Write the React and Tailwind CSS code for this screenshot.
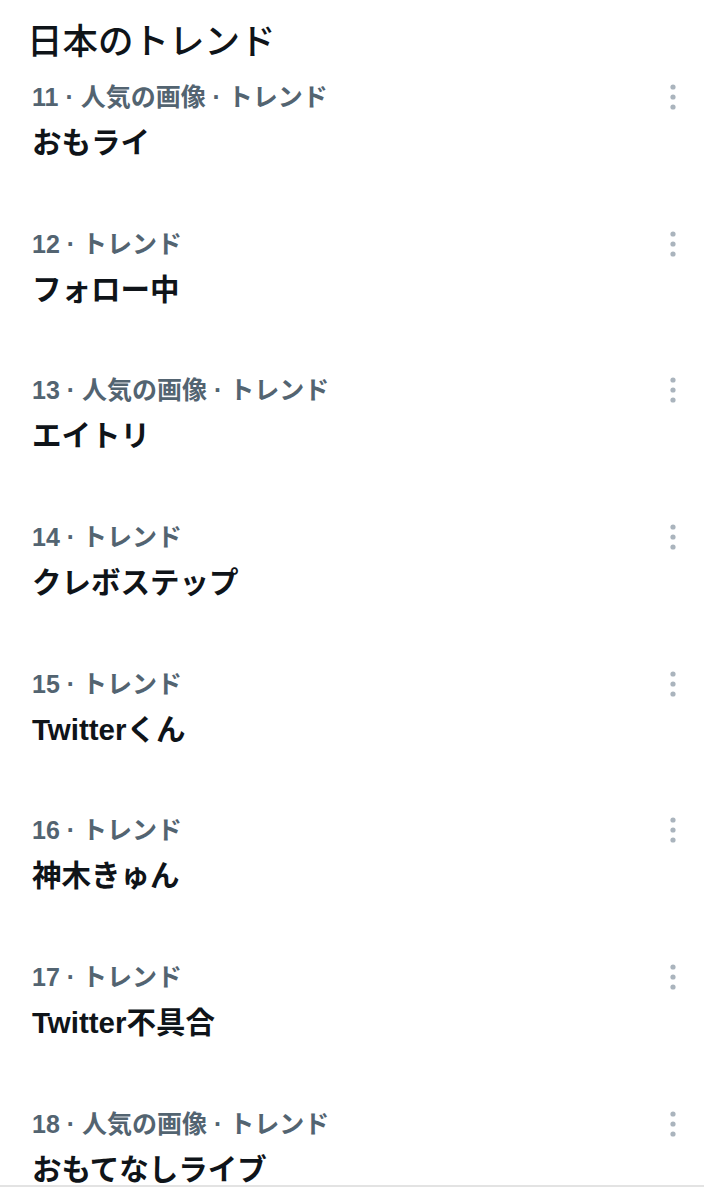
import React from "react";

const items = [
  { n: 11, cat: "人気の画像 · トレンド", name: "おもライ" },
  { n: 12, cat: "トレンド", name: "フォロー中" },
  { n: 13, cat: "人気の画像 · トレンド", name: "エイトリ" },
  { n: 14, cat: "トレンド", name: "クレボステップ" },
  { n: 15, cat: "トレンド", name: "Twitterくん" },
  { n: 16, cat: "トレンド", name: "神木きゅん" },
  { n: 17, cat: "トレンド", name: "Twitter不具合" },
  { n: 18, cat: "人気の画像 · トレンド", name: "おもてなしライブ" },
];

function Dots() {
  return (
    <svg width="8" height="28" viewBox="0 0 8 28" className="block">
      <circle cx="4" cy="4" r="2.6" fill="#aab4bd" />
      <circle cx="4" cy="14" r="2.6" fill="#aab4bd" />
      <circle cx="4" cy="24" r="2.6" fill="#aab4bd" />
    </svg>
  );
}

export default function App() {
  return (
    <div
      className="w-[704px] h-[1200px] bg-white overflow-hidden"
      style={{ fontFamily: '"Liberation Sans", "Noto Sans CJK JP", sans-serif' }}
    >
      <div className="pl-[27px] pt-[20px] h-[71px]">
        <div className="text-[35.5px] leading-[44px] font-medium text-[#0f1419]">
          日本のトレンド
        </div>
      </div>
      <div className="border-b-2 border-[#e3e3e3]">
        {items.map((it, i) => (
          <div
            key={it.n}
            className={
              (i === items.length - 1 ? "h-[87px]" : "h-[146.67px]") +
              " flex pl-[32px] pr-[27px] pt-[10px]"
            }
          >
            <div className="flex-1 flex flex-col">
              <div className="text-[25px] leading-[32px] font-bold text-[#536471] whitespace-nowrap">
                {it.n} · {it.cat}
              </div>
              <div className="mt-[12px] text-[29.5px] leading-[36px] font-bold text-[#0f1419] whitespace-nowrap">
                {it.name}
              </div>
            </div>
            <div className="h-[32px] flex items-center">
              <Dots />
            </div>
          </div>
        ))}
      </div>
    </div>
  );
}
